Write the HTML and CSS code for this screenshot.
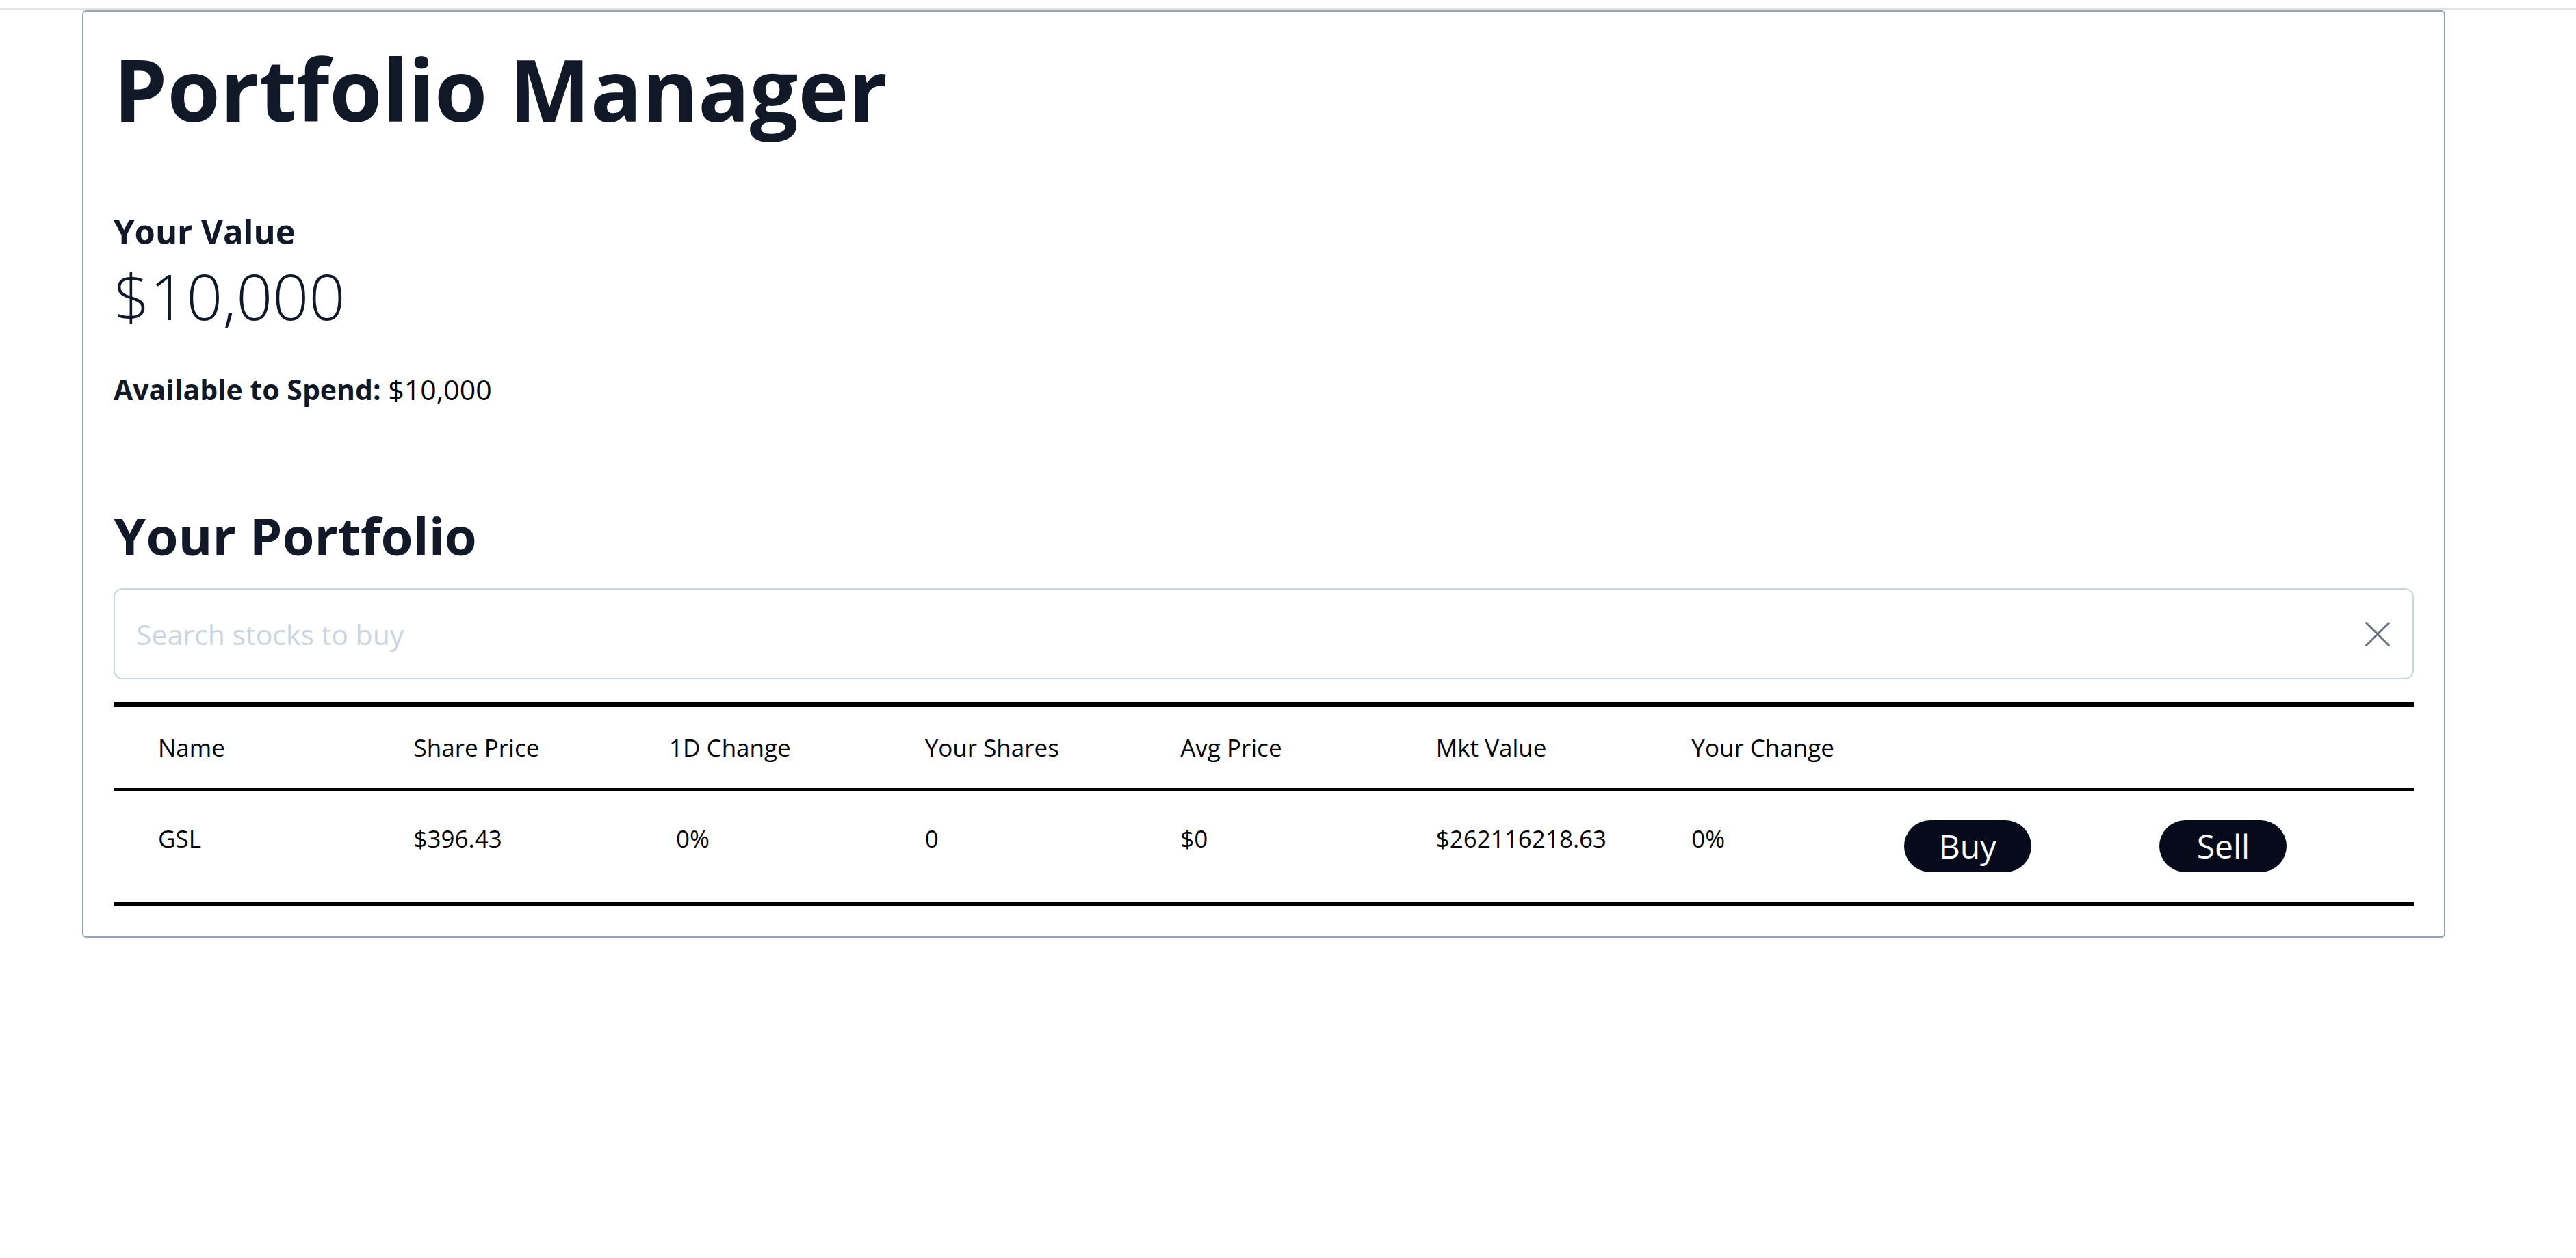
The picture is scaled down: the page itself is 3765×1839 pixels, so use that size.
FILE: index.html
```html
<!DOCTYPE html>
<html lang="en">
<head>
<meta charset="utf-8">
<title>Portfolio Manager</title>
<link rel="stylesheet" href="styles.css">
</head>
<body>
<div class="topline"></div>
<main class="card">
  <h1 class="title">Portfolio Manager</h1>
  <section class="summary">
    <h2 class="value-label">Your Value</h2>
    <p class="value-amount">$10,000</p>
    <p class="available"><strong>Available to Spend:</strong> $10,000</p>
  </section>
  <h2 class="section-title">Your Portfolio</h2>
  <div class="search">
    <input class="search-input" type="text" placeholder="Search stocks to buy">
    <button class="clear" type="button" aria-label="Clear">
      <svg width="36" height="36" viewBox="0 0 36 36" fill="none" stroke="#6b7280" stroke-width="3" stroke-linecap="round"><path d="M1.5 1.5L34.5 34.5M34.5 1.5L1.5 34.5"/></svg>
    </button>
  </div>
  <div class="table">
    <div class="row head">
      <div class="cell">Name</div>
      <div class="cell">Share Price</div>
      <div class="cell">1D Change</div>
      <div class="cell">Your Shares</div>
      <div class="cell">Avg Price</div>
      <div class="cell">Mkt Value</div>
      <div class="cell">Your Change</div>
      <div class="cell"></div>
      <div class="cell"></div>
    </div>
    <div class="row body">
      <div class="cell">GSL</div>
      <div class="cell">$396.43</div>
      <div class="cell indent">0%</div>
      <div class="cell">0</div>
      <div class="cell">$0</div>
      <div class="cell">$262116218.63</div>
      <div class="cell">0%</div>
      <div class="btn-cell"><button class="pill" type="button">Buy</button></div>
      <div class="btn-cell"><button class="pill" type="button">Sell</button></div>
    </div>
  </div>
</main>
</body>
</html>
```
FILE: styles.css
```css
* { box-sizing: border-box; }

body {
  margin: 0;
  background: #ffffff;
  font-family: "Open Sans", "Noto Sans", "Liberation Sans", sans-serif;
  color: #111827;
}

.topline {
  height: 3px;
  margin-top: 12px;
  background: #e3e3e3;
}

.card {
  width: 3454px;
  margin-left: 120px;
  border: 2px solid #94a3b8;
  border-radius: 6px;
  padding: 44px;
  background: #ffffff;
}

.title {
  margin: 0;
  font-size: 125px;
  line-height: 137px;
  font-weight: 700;
  color: #111827;
}

.summary {
  display: flex;
  flex-direction: column;
}

.value-label {
  margin: 105px 0 0;
  font-size: 49px;
  line-height: 70px;
  font-weight: 700;
}

.value-amount {
  margin: 4px 0 0;
  font-size: 93px;
  line-height: 110px;
  font-weight: 300;
}

.available {
  margin: 52px 0 0;
  font-size: 41px;
  line-height: 60px;
  color: #000000;
}

.available strong {
  color: #111827;
  font-weight: 700;
}

.section-title {
  margin: 134px 0 0;
  font-size: 76px;
  line-height: 100px;
  font-weight: 700;
}

.search {
  display: flex;
  align-items: center;
  height: 133px;
  margin-top: 27px;
  padding: 0 33px 0 31px;
  border: 2px solid #cbd5e1;
  border-radius: 13px;
}

.search-input {
  flex: 1;
  border: none;
  outline: none;
  padding: 0;
  font-family: inherit;
  font-size: 41px;
  color: #111827;
  background: transparent;
}

.search-input::placeholder {
  color: #cbd5e1;
}

.clear {
  display: flex;
  width: 36px;
  height: 36px;
  padding: 0;
  border: none;
  background: none;
}

.table {
  margin-top: 33px;
  color: #000000;
}

.row {
  display: grid;
  grid-template-columns: repeat(9, 1fr);
  font-size: 35px;
  line-height: 48px;
}

.row.head {
  border-top: 7px solid #000000;
  border-bottom: 4px solid #000000;
  height: 130px;
  align-items: start;
  padding-top: 36px;
}

.row.body {
  border-bottom: 7px solid #000000;
  height: 169px;
  align-items: start;
}

.cell {
  padding-left: 65px;
}

.row.body .cell {
  padding-top: 46px;
}

.cell.indent {
  padding-left: 75px;
}

.btn-cell {
  padding: 43px 0 0 2px;
}

.pill {
  width: 186px;
  height: 76px;
  border: none;
  border-radius: 38px;
  background: #060a1a;
  color: #ffffff;
  font-family: inherit;
  font-size: 48px;
  line-height: 76px;
  padding: 0;
}
```
